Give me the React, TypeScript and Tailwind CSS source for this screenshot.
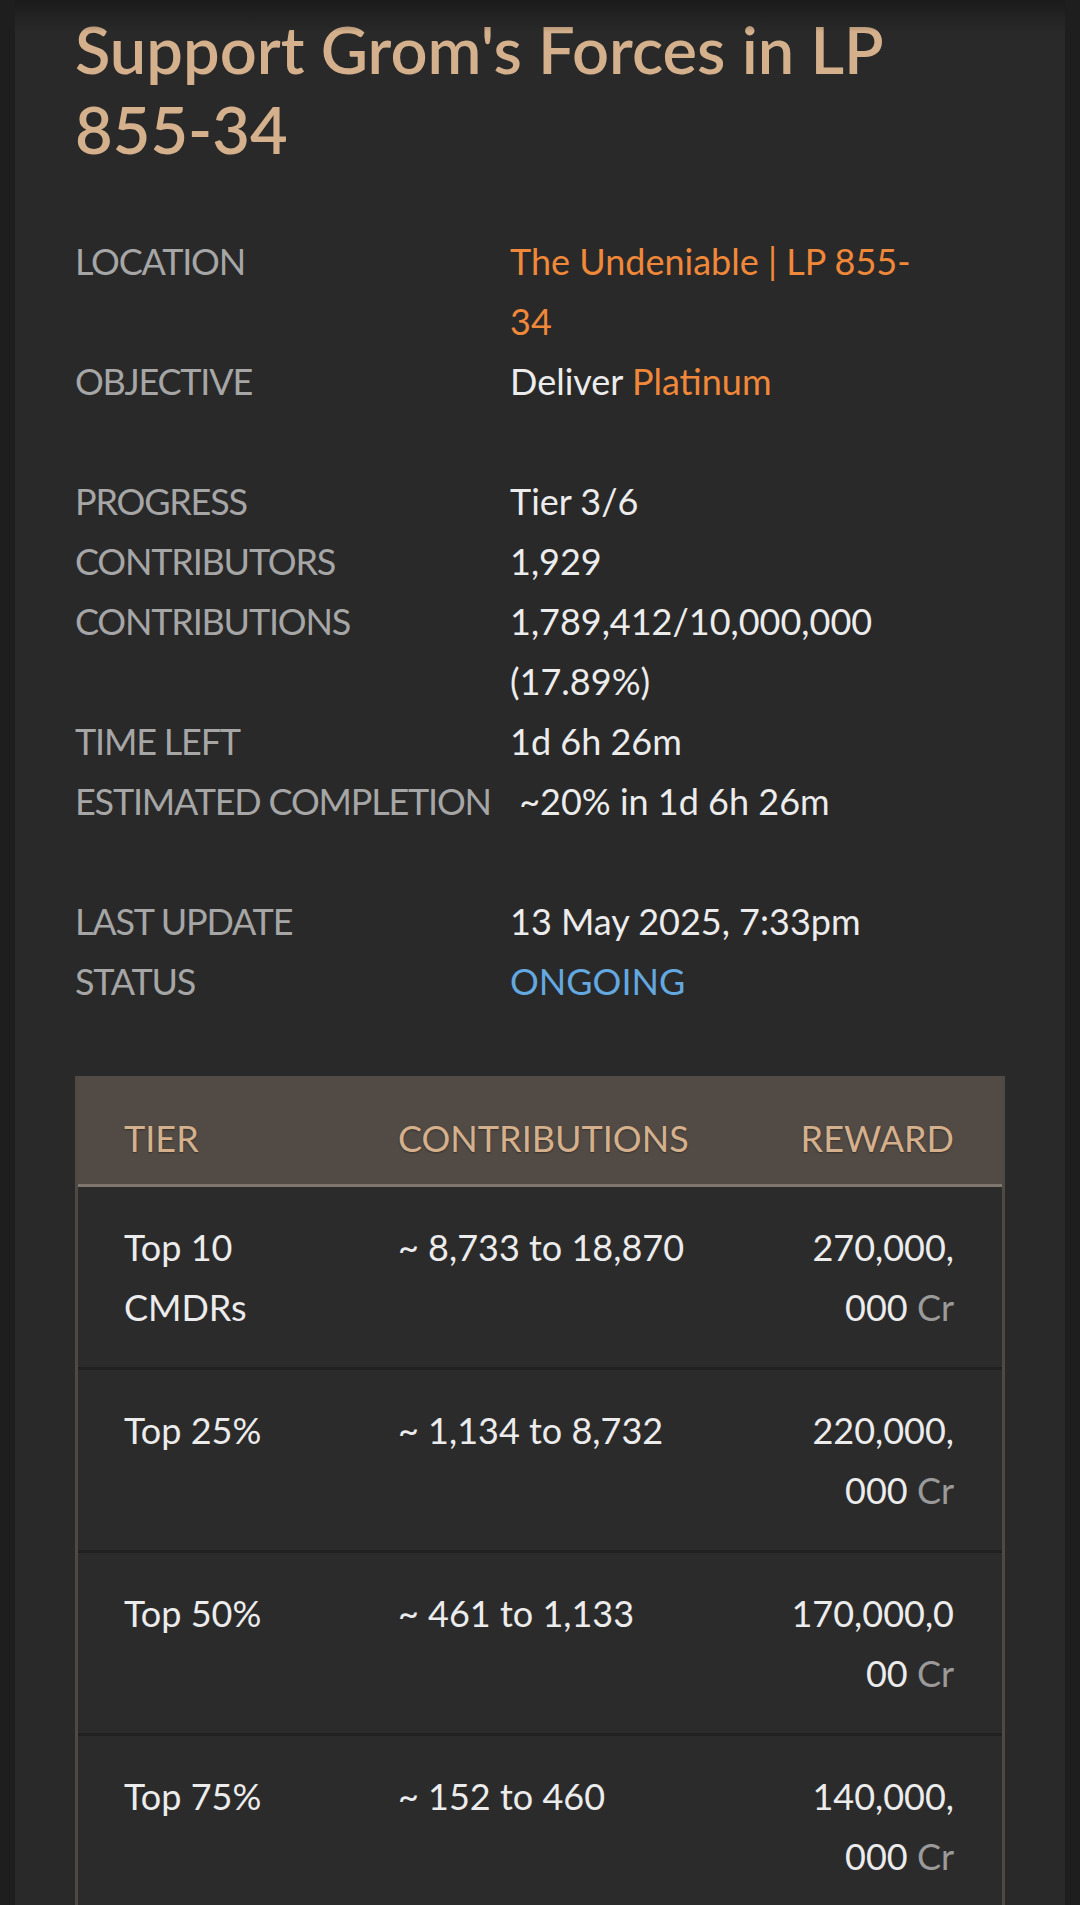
import React from "react";

const font = { fontFamily: 'Lato, "Open Sans", sans-serif' };

function Row({ label, children }: { label: string; children: React.ReactNode }) {
  return (
    <>
      <dt className="text-[#a6a6a6] uppercase whitespace-nowrap tracking-[-1.2px]">{label}</dt>
      <dd className="text-[#ececec] max-w-[425px]">{children}</dd>
    </>
  );
}

const tiers = [
  { tier: "Top 10 CMDRs", range: "~ 8,733 to 18,870", reward: ["270,000,", "000"] },
  { tier: "Top 25%", range: "~ 1,134 to 8,732", reward: ["220,000,", "000"] },
  { tier: "Top 50%", range: "~ 461 to 1,133", reward: ["170,000,0", "00"] },
  { tier: "Top 75%", range: "~ 152 to 460", reward: ["140,000,", "000"] },
  { tier: "Top 100%", range: "~ 1 to 151", reward: ["110,000,0", "00"] },
];

export default function App() {
  return (
    <div className="min-h-[1905px] bg-[#1e1e1e] relative" style={font}>
      <div className="mx-[15px] bg-[#292929] px-[60px] pb-[60px] relative">
        <div className="absolute left-0 right-0 top-0 h-[32px] bg-gradient-to-b from-[#1b1b1b] to-transparent pointer-events-none" />
        <h1 className="text-[#d5b08c] text-[65px] leading-[80px] font-semibold pt-[9px]">
          Support Grom's Forces in LP 855-34
        </h1>

        <dl className="grid grid-cols-[435px_1fr] text-[36px] leading-[60px] mt-[62px]">
          <Row label="Location">
            <span className="text-[#f0883a]">The Undeniable | LP 855-34</span>
          </Row>
          <Row label="Objective">
            Deliver <span className="text-[#f0883a]">Platinum</span>
          </Row>
          <div className="col-span-2 h-[60px]" />
          <Row label="Progress">Tier 3/6</Row>
          <Row label="Contributors">1,929</Row>
          <Row label="Contributions">1,789,412/10,000,000 (17.89%)</Row>
          <Row label="Time left">1d 6h 26m</Row>
          <Row label="Estimated completion">{"\u00a0~20% in 1d 6h 26m"}</Row>
          <div className="col-span-2 h-[60px]" />
          <Row label="Last update">13 May 2025, 7:33pm</Row>
          <Row label="Status">
            <span className="text-[#64a8e0]">ONGOING</span>
          </Row>
        </dl>

        <div className="mt-[65px] border-x-[3px] border-[#4f4944] text-[36px] leading-[60px]">
          <div className="grid grid-cols-[272px_387px_265px] bg-[#524a44] border-b-[3px] border-[#7f776f] text-[#d5b08c] uppercase pt-[32px] pb-[16px] [text-shadow:0_1px_2px_rgba(0,0,0,0.35)]">
            <div className="px-[46px]">Tier</div>
            <div className="px-[48px]">Contributions</div>
            <div className="px-[48px] text-right">Reward</div>
          </div>
          {tiers.map((t, i) => (
            <div
              key={t.tier}
              className={`grid grid-cols-[272px_387px_265px] bg-[#2b2b2b] text-[#ececec] py-[30px] ${i > 0 ? "border-t-[3px] border-[#212121]" : ""}`}
            >
              <div className="px-[46px]">{t.tier}</div>
              <div className="px-[48px]">{t.range}</div>
              <div className="px-[48px] text-right whitespace-nowrap">
                {t.reward[0]}
                <br />
                {t.reward[1]} <span className="text-[#9a9a9a]">Cr</span>
              </div>
            </div>
          ))}
        </div>
      </div>
    </div>
  );
}
